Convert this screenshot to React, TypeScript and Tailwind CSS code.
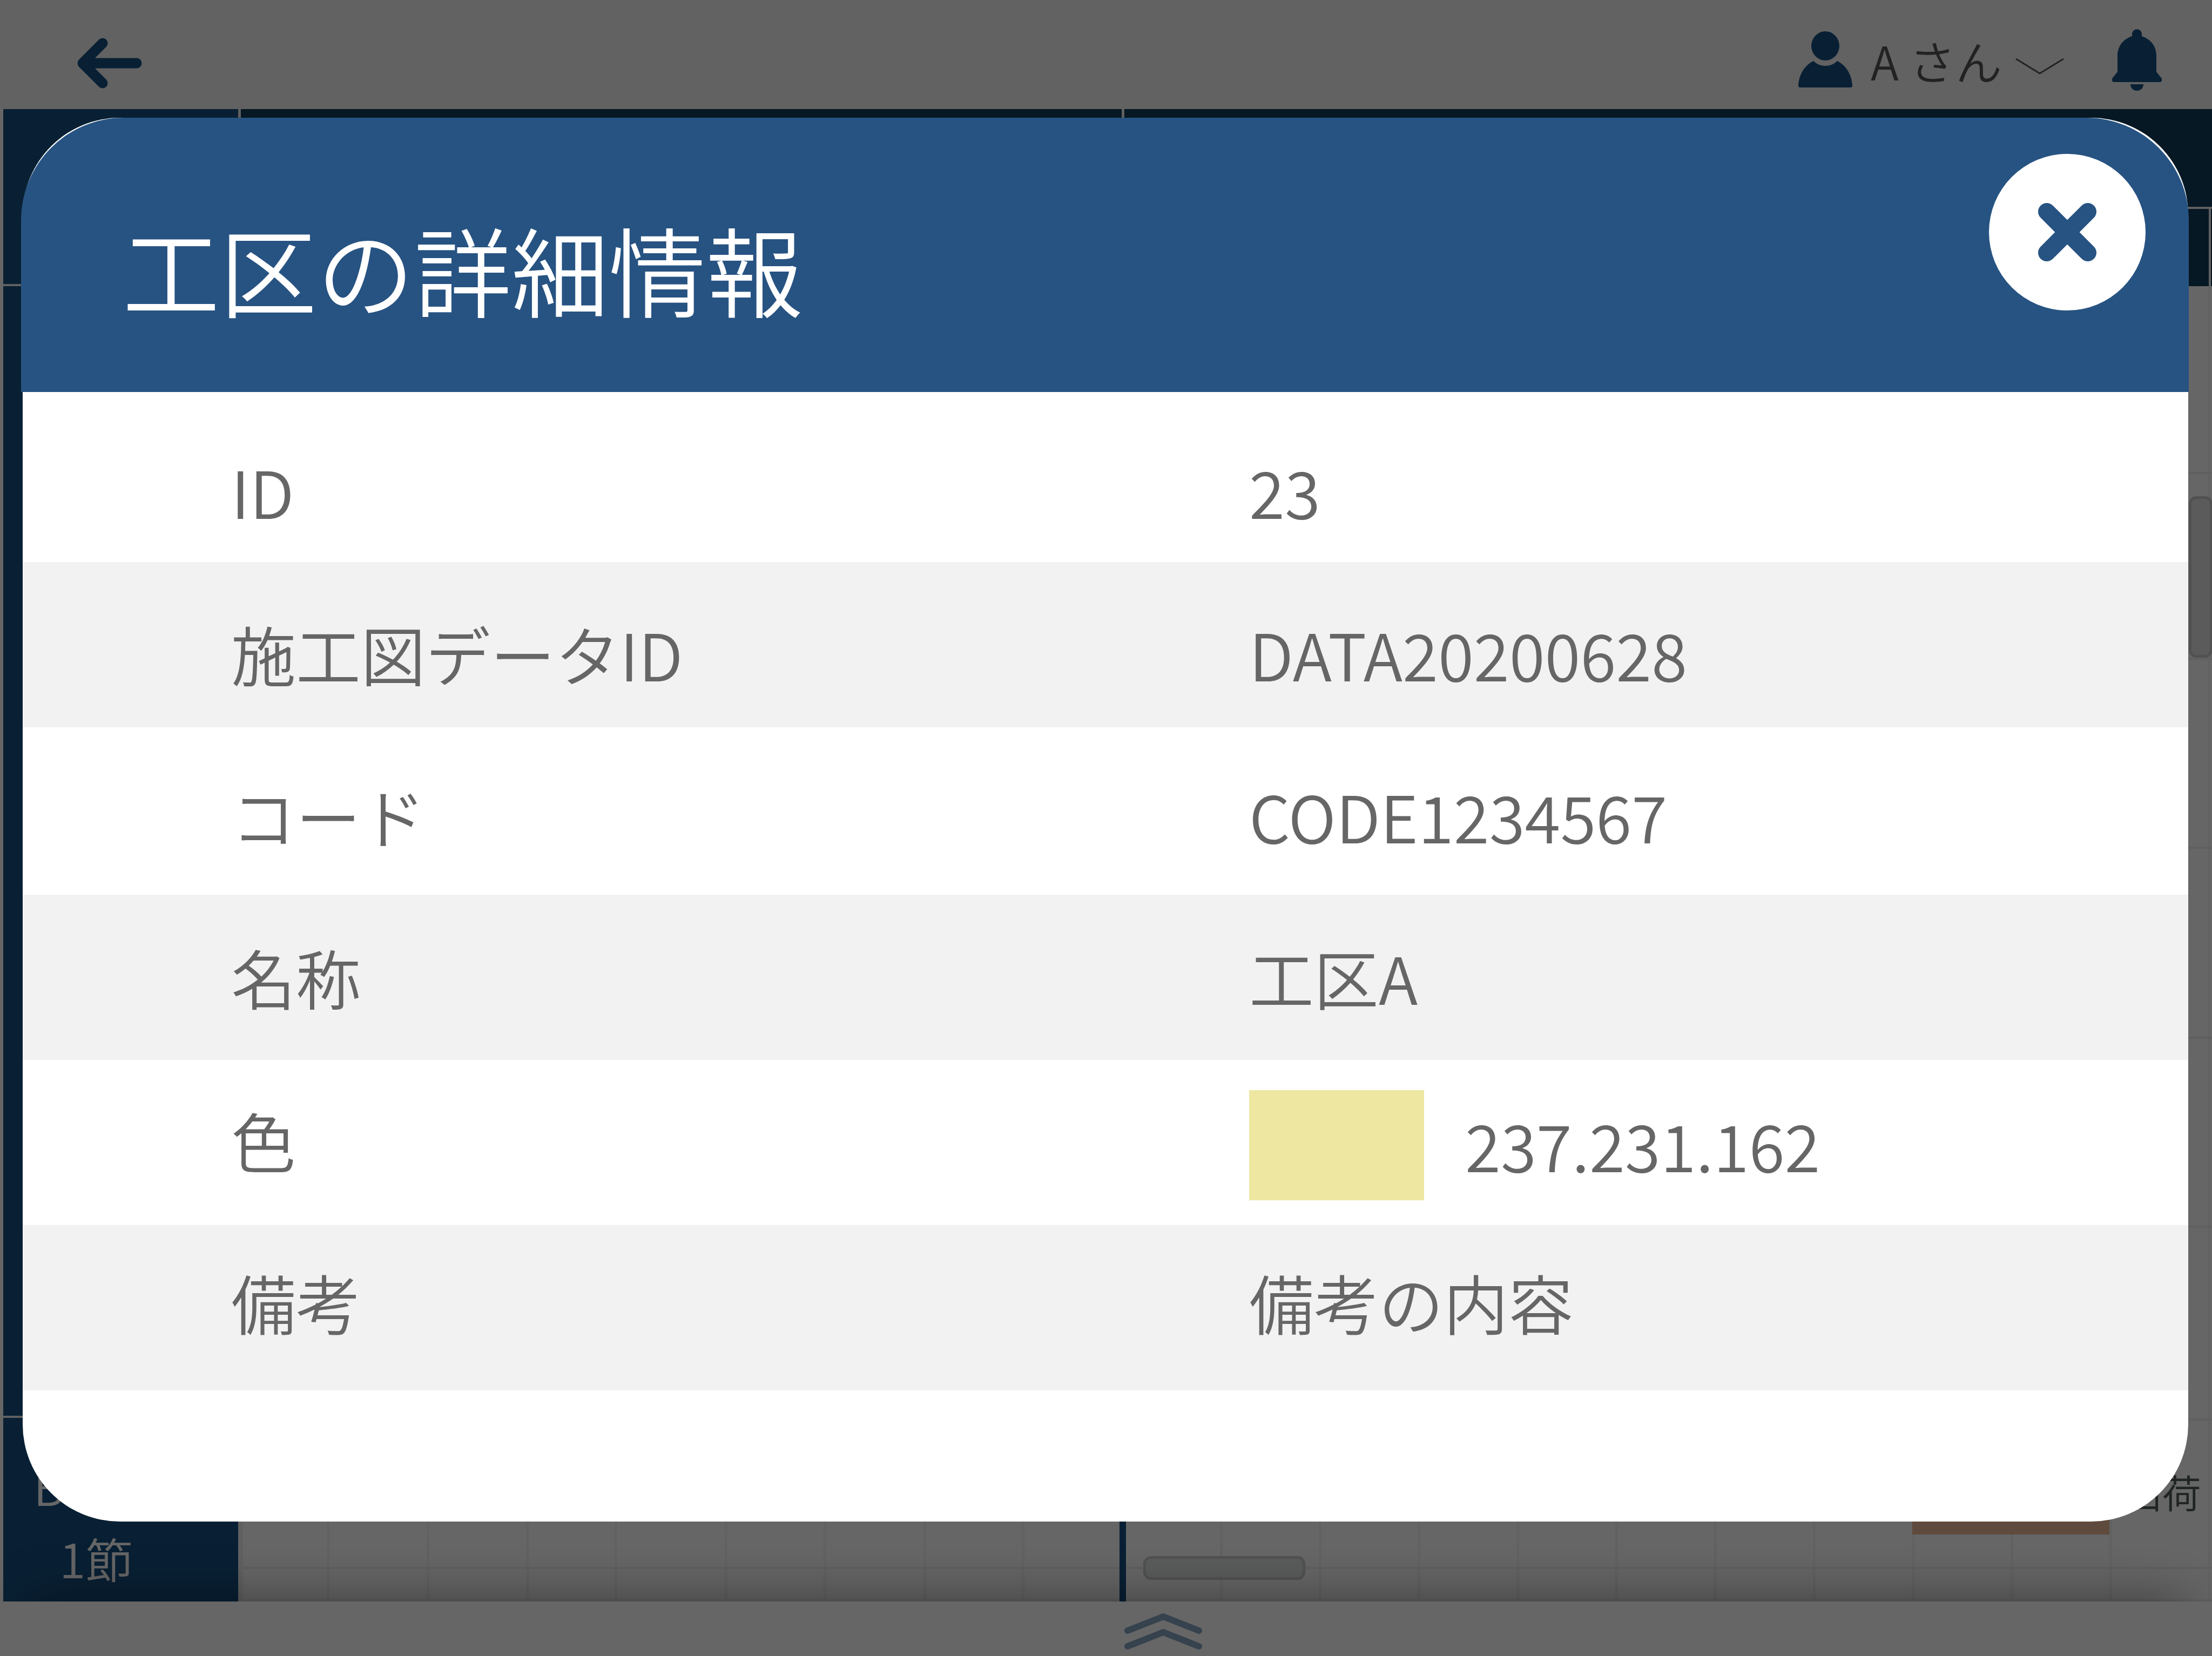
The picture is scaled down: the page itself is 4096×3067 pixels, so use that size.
import type { ReactNode } from "react";

type Detail = { label: string; value: ReactNode; row: string; labelPad: string; valuePad: string };

const details: Detail[] = [
  { label: "ID", value: "23", row: "h-[315px]", labelPad: "pt-[123px]", valuePad: "pt-[123px]" },
  { label: "施工図データID", value: "DATA20200628", row: "h-[306px] bg-[#f2f2f2]", labelPad: "pt-[109px]", valuePad: "pt-[109px]" },
  { label: "コード", value: "CODE1234567", row: "h-[310px]", labelPad: "pt-[103px]", valuePad: "pt-[103px]" },
  { label: "名称", value: "工区A", row: "h-[306px] bg-[#f2f2f2]", labelPad: "pt-[92px]", valuePad: "pt-[92px]" },
  {
    label: "色",
    value: (
      <span className="flex items-start gap-[76px]">
        <span className="h-[204px] w-[324px] bg-[#ede7a2]" />
        <span className="pt-[40px]">237.231.162</span>
      </span>
    ),
    row: "h-[306px]",
    labelPad: "pt-[88px]",
    valuePad: "pt-[56px]",
  },
  { label: "備考", value: "備考の内容", row: "h-[306px] bg-[#f2f2f2]", labelPad: "pt-[82px]", valuePad: "pt-[82px]" },
];

const rowHeights = [
  "h-[348px]",
  "h-[344px]",
  "h-[350px]",
  "h-[352px]",
  "h-[350px]",
  "h-[357px]",
  "h-[275px]",
  "flex-1",
];

const pastColumns = [
  "w-[160px]",
  "w-[185px]",
  "w-[184px]",
  "w-[164px]",
  "w-[204px]",
  "w-[183px]",
  "w-[185px]",
  "w-[182px]",
  "w-[184px]",
];

const comingColumns = Array.from({ length: 11 }, (_, i) => i);

function TopBar() {
  return (
    <header className="flex h-[202px] items-center bg-[#f6f6f6] pl-[143px] pr-[93px]">
      <button type="button" aria-label="戻る" className="mt-[31px]">
        <svg className="h-[94px] w-[120px]" viewBox="0 0 120 94" fill="none" stroke="#175082" strokeWidth="19" strokeLinecap="round" strokeLinejoin="round">
          <path d="M47 10 10 47l37 37M12 47h98" />
        </svg>
      </button>
      <button type="button" className="ml-auto flex items-center text-[86px] leading-[90px] text-[#555555]">
        <svg className="mt-[18px] h-[104px] w-[100px]" viewBox="0 0 100 104" fill="#175082">
          <ellipse cx="50" cy="27" rx="26" ry="27" />
          <path d="M28 55c12 12 32 12 44 0 17 8 27 26 28 45q0 4-3 4H3q-3 0-3-4C1 81 11 63 28 55z" />
        </svg>
        <span className="ml-[34px] mt-[22px]">A さん</span>
        <svg className="ml-[24px] mt-[44px] h-[32px] w-[92px]" viewBox="0 0 92 32" fill="none" stroke="#555555" strokeWidth="3">
          <path d="M2 2l44 27L90 2" />
        </svg>
      </button>
      <button type="button" aria-label="通知" className="ml-[88px] mt-[20px]">
        <svg className="h-[116px] w-[92px]" viewBox="0 0 92 116" fill="#175082">
          <path d="M37 10a9 9 0 0 1 18 0v4c18 6 27 20 27 36v30l8 10q3 3 2 7-1 2-4 2H4q-3 0-4-2-1-4 2-7l8-10V50c0-16 9-30 27-36z" />
          <path d="M34 103h24c0 16-24 16-24 0z" />
        </svg>
      </button>
    </header>
  );
}

function Schedule() {
  return (
    <main className="relative flex flex-1 overflow-hidden">
      <div className="flex w-[435px] flex-col gap-[4px] bg-[#f0f0f0]">
        <div className="h-[324px] bg-[#175082]" />
        <div className="flex-1 bg-[#175082]" />
        <div className="h-[340px] bg-[#175082] pt-[58px] text-[88px] leading-[134px] text-white">
          <p className="pl-[56px]">B</p>
          <p className="pl-[104px]">1節</p>
        </div>
      </div>
      <div className="flex flex-1 flex-col">
        <div className="flex h-[328px] gap-[5px] bg-[#f0f0f0] pl-[5px]">
          <div className="w-[1631px] bg-[#113e5a]" />
          <div className="flex flex-1 flex-col gap-[4px]">
            <div className="h-[181px] bg-[#113e5a]" />
            <div className="flex flex-1 gap-[4px]">
              <div className="flex-1 bg-[#113e5a]" />
              <div className="w-[2px] bg-[#113e5a]" />
            </div>
          </div>
        </div>
        <div className="flex flex-1 flex-col border-l-[9px] border-[#f1f1f1]">
          {rowHeights.map((height, row) => (
            <div key={row} className={`flex border-b-[4px] border-[#f0f0f0] pr-[2px] ${height}`}>
              {pastColumns.map((width, col) => (
                <div key={col} className={`shrink-0 border-r-[5px] border-[#f2f4f3] ${width}`} />
              ))}
              {comingColumns.map((col) => (
                <div key={col} className="flex-1 border-r-[5px] border-[#f2f4f3]" />
              ))}
            </div>
          ))}
        </div>
      </div>
      {/* Items placed freely on the schedule canvas */}
      <div className="absolute bottom-0 right-[2011px] top-[328px] w-[12px] bg-[#175082]" />
      <div className="absolute bottom-[124px] right-[190px] h-[200px] w-[365px] bg-[#eebb98]" />
      <p className="absolute bottom-[159px] right-[20px] text-[72px] leading-[90px] text-[#505a5a]">出荷</p>
      <div className="absolute bottom-[40px] right-[1679px] h-[44px] w-[300px] rounded-[14px] border-[5px] border-[#cdcdcd] bg-[#e2e6e4]" />
      <div className="absolute right-[-1px] top-[717px] h-[299px] w-[44px] rounded-[14px] border-[5px] border-[#cbcbcb] bg-[#e4e4e4]" />
    </main>
  );
}

function BottomBar() {
  return (
    <footer className="relative h-[101px]">
      <div className="absolute inset-y-0 left-[46px] right-[46px] shadow-[0_0_100px_rgba(0,0,0,0.44)]" />
      <div className="relative flex h-full justify-center bg-white pl-[212px]">
        <button type="button" aria-label="パネルを開く" className="mt-[22px] h-[67px]">
          <svg className="h-[67px] w-[148px]" viewBox="0 0 148 67" fill="none" stroke="#87a5c3" strokeWidth="12" strokeLinecap="round" strokeLinejoin="round">
            <path d="M8 32 74 6l66 26M8 61l66-26 66 26" />
          </svg>
        </button>
      </div>
    </footer>
  );
}

function DetailDialog() {
  return (
    <div role="dialog" aria-modal="true" aria-labelledby="dialog-title" className="absolute bottom-[249px] left-[42px] right-[44px] top-[218px] rounded-[180px] bg-white">
      <div className="-ml-[3px] -mr-[1px] flex h-[508px] items-start justify-between rounded-t-[190px] bg-[#275382] pl-[188px] pr-[80px]">
        <h1 id="dialog-title" className="mt-[188px] text-[180px] leading-[180px] text-white">工区の詳細情報</h1>
        <button type="button" aria-label="閉じる" className="mt-[67px] flex size-[290px] items-center justify-center rounded-full bg-white">
          <svg className="size-[108px]" viewBox="0 0 108 108" fill="none" stroke="#275382" strokeWidth="32" strokeLinecap="round">
            <path d="M16 16l76 76M92 16 16 92" />
          </svg>
        </button>
      </div>
      <table className="w-full table-fixed text-[120px] leading-[120px] text-[#666666]">
        <tbody>
          {details.map((d) => (
            <tr key={d.label} className={d.row}>
              <th scope="row" className={`w-[2271px] pl-[386px] text-left align-top font-[350] ${d.labelPad}`}>
                {d.label}
              </th>
              <td className={`align-top ${d.valuePad}`}>{d.value}</td>
            </tr>
          ))}
        </tbody>
      </table>
    </div>
  );
}

export default function App() {
  return (
    <div className="relative flex min-h-screen flex-col overflow-hidden bg-white font-['Noto_Sans_CJK_JP',sans-serif] font-[350]">
      <TopBar />
      <div className="flex flex-1 flex-col pl-[6px]">
        <Schedule />
      </div>
      <BottomBar />
      <div className="absolute inset-0 bg-black/60" />
      <DetailDialog />
    </div>
  );
}
